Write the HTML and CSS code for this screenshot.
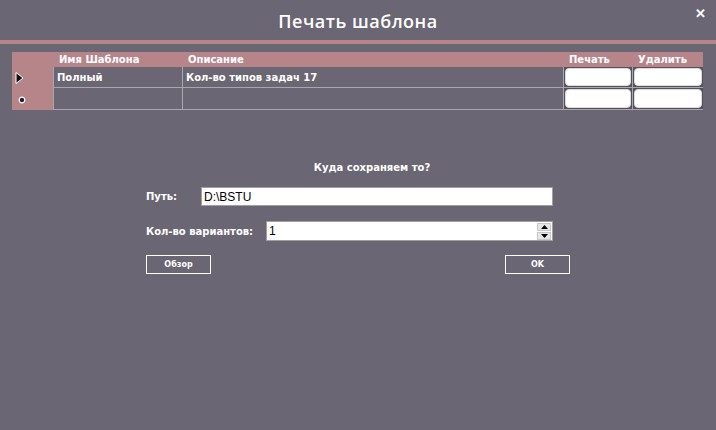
FILE: index.html
```html
<!DOCTYPE html>
<html>
<head>
<meta charset="utf-8">
<link rel="stylesheet" href="styles.css">
</head>
<body>
<div class="window">
  <header class="titlebar">
    <h1 class="title">Печать шаблона</h1>
    <span class="close">✕</span>
  </header>
  <div class="band"></div>
  <div class="grid">
    <div class="rh head"></div>
    <div class="hc">Имя Шаблона</div>
    <div class="hc">Описание</div>
    <div class="hc">Печать</div>
    <div class="hc">Удалить</div>

    <div class="rh"><svg width="9" height="12" viewBox="0 0 9 12"><path d="M1 0.5 L8 6 L1 11.5 Z" fill="#111" stroke="#fff" stroke-width="1"/></svg></div>
    <div class="c">Полный</div>
    <div class="c">Кол-во типов задач 17</div>
    <div class="c btncell"><span class="cellbtn"></span></div>
    <div class="c btncell"><span class="cellbtn"></span></div>

    <div class="rh rh-new"><svg width="8" height="8" viewBox="0 0 8 8"><circle cx="4" cy="4" r="2.8" fill="#222" stroke="#fff" stroke-width="1.2"/></svg></div>
    <div class="c"></div>
    <div class="c"></div>
    <div class="c btncell"><span class="cellbtn"></span></div>
    <div class="c btncell"><span class="cellbtn"></span></div>
  </div>

  <section class="form">
    <div class="question">Куда сохраняем то?</div>
    <div class="row row-path">
      <label class="lbl path-lbl">Путь:</label>
      <div class="input path">D:\BSTU</div>
    </div>
    <div class="row row-num">
      <label class="lbl num-lbl">Кол-во вариантов:</label>
      <div class="input num">
        <span>1</span>
        <span class="spin">
          <span class="arr"><svg width="7" height="4" viewBox="0 0 7 4"><path d="M0 4 L3.5 0 L7 4 Z" fill="#000"/></svg></span>
          <span class="arr"><svg width="7" height="4" viewBox="0 0 7 4"><path d="M0 0 L3.5 4 L7 0 Z" fill="#000"/></svg></span>
        </span>
      </div>
    </div>
    <div class="buttons">
      <button class="btn">Обзор</button>
      <button class="btn">OK</button>
    </div>
  </section>
</div>
</body>
</html>
```

FILE: styles.css
```css
* { box-sizing: border-box; }
html, body {
  margin: 0;
  padding: 0;
  background: #6b6673;
  width: 716px;
  height: 430px;
  overflow: hidden;
  font-family: "DejaVu Sans", Verdana, sans-serif;
  color: #fff;
}
.window {
  width: 716px;
  height: 430px;
  display: flex;
  flex-direction: column;
}
.titlebar {
  position: relative;
  height: 40px;
  display: flex;
  justify-content: center;
  align-items: center;
}
.title {
  margin: 0;
  font-family: "Open Sans", "Liberation Sans", sans-serif;
  font-size: 18px;
  font-weight: 600;
  letter-spacing: 0.5px;
  padding-top: 1px;
}
.close {
  position: absolute;
  right: 10px;
  top: 6px;
  font-family: "Liberation Sans", Arial, sans-serif;
  font-size: 13px;
  font-weight: bold;
}
.band {
  height: 4px;
  background: #b5858a;
}
.grid {
  margin: 8px 13px 0 12px;
  display: grid;
  grid-template-columns: 41px 129px 381px 69px 71px;
  grid-template-rows: 15px 21px 22px;
  font-size: 10px;
  font-weight: bold;
}
.rh {
  background: #b5858a;
  display: flex;
  align-items: center;
  padding-left: 3px;
}
.rh-new { padding-left: 6px; padding-top: 1px; }
.hc {
  background: #b5858a;
  padding-left: 6px;
  line-height: 15px;
}
.c {
  border-left: 1px solid #a9a6ad;
  border-bottom: 1px solid #a9a6ad;
  padding-left: 3px;
  display: flex;
  align-items: center;
}
.btncell {
  padding: 1px;
  background: #55515d;
}
.cellbtn {
  display: block;
  width: 100%;
  height: 100%;
  background: #fff;
  border-radius: 4px;
  border: 1px solid #ddd;
}
.form {
  display: flex;
  flex-direction: column;
  padding-left: 146px;
  width: 570px;
}
.question {
  margin-top: 52px;
  font-size: 10px;
  font-weight: bold;
  text-align: center;
  padding-left: 28px;
}
.row {
  display: flex;
  align-items: center;
  font-size: 10px;
  font-weight: bold;
}
.row-path { margin-top: 14px; }
.row-num { margin-top: 15px; }
.path-lbl { width: 55px; }
.num-lbl { width: 120px; white-space: nowrap; }
.input {
  background: #fff;
  color: #000;
  border: 1px solid #a0a0a0;
  height: 20px;
  font-family: "Liberation Sans", Arial, sans-serif;
  font-size: 12px;
  font-weight: normal;
  display: flex;
  align-items: center;
  padding-left: 2px;
}
.path { width: 352px; height: 19px; }
.num { width: 287px; justify-content: space-between; padding-right: 1px; }
.spin {
  display: flex;
  flex-direction: column;
  width: 14px;
  height: 17px;
  gap: 1px;
}
.arr {
  flex: 1;
  background: #e6e6e6;
  border: 1px solid #c8c8c8;
  display: flex;
  justify-content: center;
  align-items: center;
}
.buttons {
  display: flex;
  justify-content: space-between;
  margin-top: 14px;
}
.btn {
  width: 65px;
  height: 19px;
  background: transparent;
  border: 1px solid #fff;
  color: #fff;
  font-family: "DejaVu Sans", Verdana, sans-serif;
  font-size: 8px;
  font-weight: bold;
  padding: 0;
}
```
